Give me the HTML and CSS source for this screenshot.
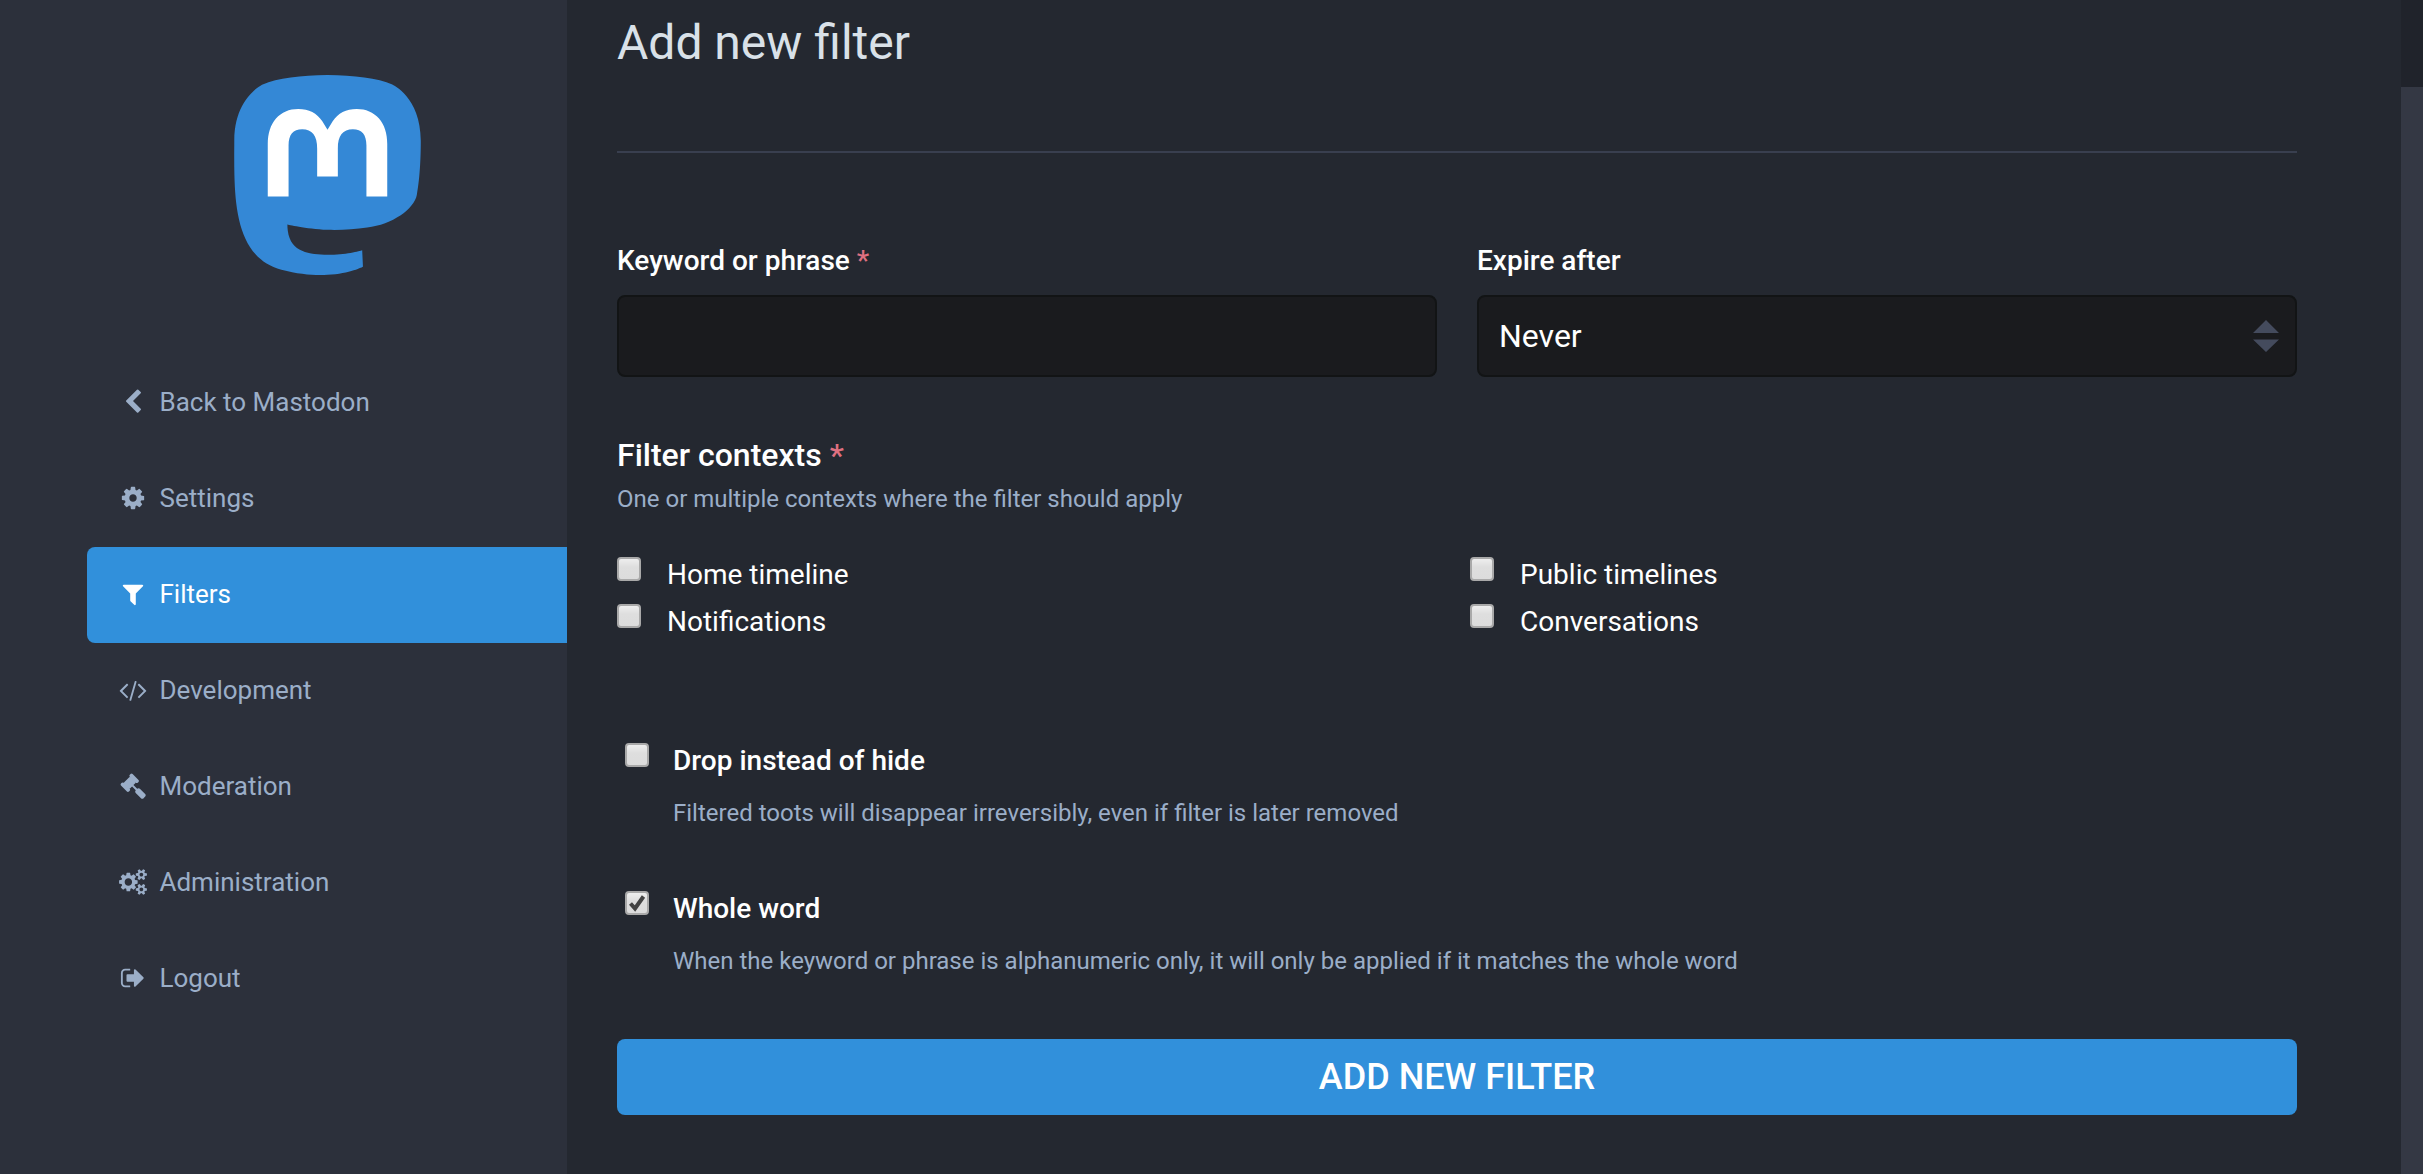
FILE: index.html
```html
<!DOCTYPE html>
<html lang="en">
<head>
<meta charset="utf-8">
<title>Add new filter</title>
<link rel="stylesheet" href="styles.css">
</head>
<body>
<div class="layout">
  <aside class="sidebar">
    <a class="logo" href="#">
      <svg viewBox="0 0 216.4144 232.00976" width="187" height="200"><path fill="#3488d6" d="M211.80734 139.0875c-3.18125 16.36625-28.4925 34.2775-57.5625 37.74875-15.15875 1.80875-30.08375 3.47125-45.99875 2.74125-26.0275-1.1925-46.565-6.2125-46.565-6.2125 0 2.53375.15625 4.94625.46875 7.2025 3.38375 25.68625 25.47 27.225 46.39125 27.9425 21.11625.7225 39.91875-5.20625 39.91875-5.20625l.8675 19.09s-14.77 7.93125-41.08125 9.39c-14.50875.7975-32.52375-.365-53.50625-5.91875C9.23234 213.82 1.40609 165.31125.20859 116.09125c-.365-14.61375-.14-28.39375-.14-39.91875 0-50.33 32.97625-65.0825 32.97625-65.0825C49.67234 3.45375 78.20359.2425 107.86484 0h.72875c29.66125.2425 58.21125 3.45375 74.8375 11.09 0 0 32.975 14.7525 32.975 65.0825 0 0 .41375 37.13375-4.59875 62.915"/><path fill="#fff" d="M177.50984 80.077v60.94125h-24.14375v-59.15c0-12.46875-5.24625-18.7975-15.74-18.7975-11.6025 0-17.4175 7.5075-17.4175 22.3525v32.37625H96.20734V85.42325c0-14.845-5.81625-22.3525-17.41875-22.3525-10.49375 0-15.74 6.32875-15.74 18.7975v59.15H38.90484V80.077c0-12.455 3.17125-22.3525 9.54125-29.675 6.56875-7.3225 15.17125-11.07625 25.85-11.07625 12.355 0 21.71125 4.74875 27.8975 14.2475l6.01375 10.08125 6.015-10.08125c6.185-9.49875 15.54125-14.2475 27.8975-14.2475 10.6775 0 19.28 3.75375 25.85 11.07625 6.36875 7.3225 9.54 17.22 9.54 29.675"/></svg>
    </a>
    <nav class="nav">
      <a class="nav-item" href="#"><svg class="icon" viewBox="0 0 1792 1792"><path d="M1427 301l-531 531 531 531q19 19 19 45t-19 45l-166 166q-19 19-45 19t-45-19l-742-742q-19-19-19-45t19-45l742-742q19-19 45-19t45 19l166 166q19 19 19 45t-19 45z"/></svg><span>Back to Mastodon</span></a>
      <a class="nav-item" href="#"><svg class="icon" viewBox="0 0 1792 1792"><path d="M1152 896q0-106-75-181t-181-75-181 75-75 181 75 181 181 75 181-75 75-181zm512-109v222q0 12-8 23t-20 13l-185 28q-19 54-39 91 35 50 107 138 10 12 10 25t-9 23q-27 37-99 108t-94 71q-12 0-26-9l-138-108q-44 23-91 38-16 136-29 186-7 28-36 28h-222q-14 0-24.5-8.5t-11.5-21.5l-28-184q-49-16-90-37l-141 107q-10 9-25 9-14 0-25-11-126-114-165-168-7-10-7-23 0-12 8-23 15-21 51-66.5t54-70.5q-27-50-41-99l-183-27q-13-2-21-12.5t-8-23.5v-222q0-12 8-23t19-13l186-28q14-46 39-92-40-57-107-138-10-12-10-24 0-10 9-23 26-36 98.5-107.5t94.5-71.5q13 0 26 10l138 107q44-23 91-38 16-136 29-186 7-28 36-28h222q14 0 24.5 8.5t11.5 21.5l28 184q49 16 90 37l142-107q9-9 24-9 13 0 25 10 129 119 165 170 7 8 7 22 0 12-8 23-15 21-51 66.5t-54 70.5q26 50 41 98l183 28q13 2 21 12.5t8 23.5z"/></svg><span>Settings</span></a>
      <a class="nav-item nav-item-active" href="#"><svg class="icon" viewBox="0 0 1792 1792"><path d="M1595 295q17 41-14 70l-493 493v742q0 42-39 59-13 5-25 5-27 0-45-19l-256-256q-19-19-19-45v-486l-493-493q-31-29-14-70 17-39 59-39h1280q42 0 59 39z"/></svg><span>Filters</span></a>
      <a class="nav-item" href="#"><svg class="icon" viewBox="0 0 1792 1792"><path d="M553 1399l-50 50q-10 10-23 10t-23-10l-466-466q-10-10-10-23t10-23l466-466q10-10 23-10t23 10l50 50q10 10 10 23t-10 23l-393 393 393 393q10 10 10 23t-10 23zm591-1067l-373 1291q-4 13-15.5 19.5t-23.5 2.5l-62-17q-13-4-19.5-15.5t-2.5-24.5l373-1291q4-13 15.5-19.5t23.5-2.5l62 17q13 4 19.5 15.5t2.5 24.5zm657 651l-466 466q-10 10-23 10t-23-10l-50-50q-10-10-10-23t10-23l393-393-393-393q-10-10-10-23t10-23l50-50q10-10 23-10t23 10l466 466q10 10 10 23t-10 23z"/></svg><span>Development</span></a>
      <a class="nav-item" href="#"><svg class="icon" viewBox="0 0 1792 1792"><path d="M1771 1536q0 53-37 90l-107 108q-39 37-91 37-53 0-90-37l-363-364q-38-36-38-90 0-53 43-96l-256-256-126 126q-14 14-34 14t-34-14q2 2 12.5 12t12.5 13 10 11.5 10 13.5 6 13.5 5.5 16.5 1.5 18q0 38-28 68-3 3-16.5 18t-19 20.5-18.5 16.5-22 15.5-22 9-26 4.5q-40 0-68-28l-408-408q-28-28-28-68 0-13 4.5-26t9-22 15.5-22 16.5-18.5 20.5-19 18-16.5q30-28 68-28 10 0 18 1.5t16.5 5.5 13.5 6 13.5 10 11.5 10 13 12.5 12 12.5q-14-14-14-34t14-34l348-348q14-14 34-14t34 14q-2-2-12.5-12t-12.5-13-10-11.5-10-13.5-6-13.5-5.5-16.5-1.5-18q0-38 28-68 3-3 16.5-18t19-20.5 18.5-16.5 22-15.5 22-9 26-4.5q40 0 68 28l408 408q28 28 28 68 0 13-4.5 26t-9 22-15.5 22-16.5 18.5-20.5 19-18 16.5q-30 28-68 28-10 0-18-1.5t-16.5-5.5-13.5-6-13.5-10-11.5-10-13-12.5-12-12.5q14 14 14 34t-14 34l-126 126 256 256q43-43 96-43 52 0 91 37l363 363q37 39 37 91z"/></svg><span>Moderation</span></a>
      <a class="nav-item" href="#"><svg class="icon" viewBox="0 0 1792 1792"><defs><path id="small-gear" fill-rule="evenodd" d="M1664 128q0 52 -38 90t-90 38t-90 -38t-38 -90q0 -53 37.5 -90.5t90.5 -37.5t90.5 37.5t37.5 90.5zM1920 198v-140q0 -16 -149 -31q-12 -27 -30 -52q51 -113 51 -138q0 -4 -4 -7q-122 -71 -124 -71q-8 0 -46 47t-52 68q-20 -2 -30 -2t-30 2q-14 -21 -52 -68t-46 -47q-2 0 -124 71q-4 3 -4 7q0 25 51 138q-18 25 -30 52q-149 15 -149 31v140q0 16 149 31q13 29 30 52q-51 113 -51 138q0 4 4 7q4 2 35 20t59 34t30 16q8 0 46 -46.5t52 -67.5q20 2 30 2t30 -2q51 71 92 112l6 2q4 0 124 -70q4 -3 4 -7q0 -25 -51 -138q17 -23 30 -52q149 -15 149 -31z"/></defs><g transform="translate(-64 1536) scale(1 -1)"><path fill-rule="evenodd" d="M896 640q0 106 -75 181t-181 75t-181 -75t-75 -181t75 -181t181 -75t181 75t75 181zM1280 731v-185q0 -10 -7 -19.5t-16 -10.5l-155 -24q-11 -35 -32 -76q34 -48 90 -115q7 -11 7 -20q0 -12 -7 -19q-23 -30 -82.5 -89.5t-78.5 -59.5q-11 0 -21 7l-115 90q-37 -19 -77 -31q-11 -108 -23 -155q-7 -24 -30 -24h-186q-11 0 -20 7.5t-10 17.5l-23 153q-34 10 -75 31l-118 -89q-7 -7 -20 -7q-11 0 -21 8q-144 133 -144 160q0 9 7 19q10 14 41 53t47 61q-23 44 -35 82l-152 24q-10 1 -17 9.5t-7 19.5v185q0 10 7 19.5t16 10.5l155 24q11 35 32 76q-34 48 -90 115q-7 11 -7 20q0 12 7 20q22 30 82 89t79 59q11 0 21 -7l115 -90q34 18 77 32q11 108 23 154q7 24 30 24h186q11 0 20 -7.5t10 -17.5l23 -153q34 -10 75 -31l118 89q8 7 20 7q11 0 21 -8q144 -133 144 -160q0 -8 -7 -19q-12 -16 -42 -54t-45 -60q23 -48 34 -82l152 -23q10 -2 17 -10.5t7 -19.5z"/><use href="#small-gear"/><use href="#small-gear" y="1024"/></g></svg><span>Administration</span></a>
      <a class="nav-item" href="#"><svg class="icon" viewBox="0 0 1792 1792"><path d="M704 1440q0 4 1 20t.5 26.5-3 23.5-10 19.5-20.5 6.5h-320q-119 0-203.5-84.5t-84.5-203.5v-704q0-119 84.5-203.5t203.5-84.5h320q13 0 22.5 9.5t9.5 22.5q0 4 1 20t.5 26.5-3 23.5-10 19.5-20.5 6.5h-320q-66 0-113 47t-47 113v704q0 66 47 113t113 47h312l11.5 1 11.5 3 8 5.5 7 9 2 13.5zm928-544q0 26-19 45l-544 544q-19 19-45 19t-45-19-19-45v-288h-448q-26 0-45-19t-19-45v-384q0-26 19-45t45-19h448v-288q0-26 19-45t45-19 45 19l544 544q19 19 19 45z"/></svg><span>Logout</span></a>
    </nav>
  </aside>
  <main class="content">
    <h2 class="title">Add new filter</h2>
    <form class="form">
      <div class="fields-row">
        <div class="field">
          <label class="label" for="phrase">Keyword or phrase <span class="required">*</span></label>
          <input class="control" id="phrase" type="text">
        </div>
        <div class="field">
          <label class="label" for="expires">Expire after</label>
          <div class="select-wrap">
            <select class="control" id="expires"><option>Never</option></select>
            <svg class="select-arrows" viewBox="0 0 26 32" width="26" height="32"><path d="M13 0L26 13H0zM0 19.5h26L13 32z"/></svg>
          </div>
        </div>
      </div>
      <div class="contexts">
        <div class="contexts-label">Filter contexts <span class="required">*</span></div>
        <div class="hint">One or multiple contexts where the filter should apply</div>
        <div class="contexts-grid">
          <label class="context"><input class="checkbox" type="checkbox"><span>Home timeline</span></label>
          <label class="context"><input class="checkbox" type="checkbox"><span>Public timelines</span></label>
          <label class="context"><input class="checkbox" type="checkbox"><span>Notifications</span></label>
          <label class="context"><input class="checkbox" type="checkbox"><span>Conversations</span></label>
        </div>
      </div>
      <div class="option">
        <input class="checkbox" id="irreversible" type="checkbox">
        <div class="option-text">
          <label class="label" for="irreversible">Drop instead of hide</label>
          <div class="hint">Filtered toots will disappear irreversibly, even if filter is later removed</div>
        </div>
      </div>
      <div class="option">
        <input class="checkbox" id="whole" type="checkbox" checked>
        <div class="option-text">
          <label class="label" for="whole">Whole word</label>
          <div class="hint">When the keyword or phrase is alphanumeric only, it will only be applied if it matches the whole word</div>
        </div>
      </div>
      <button class="submit" type="button">Add new filter</button>
    </form>
  </main>
  <div class="scrollbar"><div class="scrollbar-thumb"></div></div>
</div>
</body>
</html>
```
FILE: styles.css
```css
* {
  box-sizing: border-box;
}

body {
  margin: 0;
  height: 1174px;
  overflow: hidden;
  background: #242830;
  color: #fff;
  font-family: Roboto, sans-serif;
}

.layout {
  display: flex;
  height: 1174px;
}

.sidebar {
  flex: none;
  width: 567px;
  padding: 75px 0 0 87px;
  background: #2c303b;
}

.logo {
  display: flex;
  justify-content: center;
  height: 280px;
}

.logo svg {
  display: block;
}

.nav-item {
  display: flex;
  align-items: center;
  gap: 10px;
  height: 96px;
  padding: 0 0 2px 30px;
  border-radius: 8px 0 0 8px;
  color: #9baec8;
  font-size: 26px;
  line-height: 36px;
  text-decoration: none;
}

.nav-item-active {
  background: #3190db;
  color: #fff;
}

.icon {
  flex: none;
  width: 26px;
  height: 26px;
  margin: 0 3.5px 0 3px;
  overflow: visible;
  fill: currentColor;
}

.content {
  flex: 1;
  padding: 15px 104px 0 50px;
}

.title {
  margin: 0 0 87px;
  padding-bottom: 80px;
  border-bottom: 2px solid #393f4f;
  color: #d9e1e8;
  font-size: 48px;
  font-weight: 400;
  line-height: 56px;
}

.fields-row {
  display: grid;
  grid-template-columns: 1fr 1fr;
  gap: 40px;
}

.label {
  display: block;
  font-size: 28px;
  font-weight: 500;
  line-height: 42px;
}

.required {
  color: #df7080;
}

.control {
  display: block;
  width: 100%;
  height: 82px;
  margin: 0;
  padding: 0 20px;
  border: 2px solid #121415;
  border-radius: 8px;
  outline: 0;
  appearance: none;
  background: #1a1b1e;
  color: #fff;
  font: 32px Roboto, sans-serif;
}

.field .label {
  margin-bottom: 13px;
}

.select-wrap {
  position: relative;
}

.select-arrows {
  position: absolute;
  top: 25px;
  right: 18px;
  fill: #444b5d;
}

.contexts {
  margin-top: 56px;
}

.contexts-label {
  margin-bottom: 4px;
  font-size: 32px;
  font-weight: 500;
  line-height: 44px;
}

.hint {
  color: #9baec8;
  font-size: 24px;
  line-height: 36px;
}

.contexts-grid {
  display: grid;
  grid-template-columns: 853px 1fr;
  margin-top: 34px;
}

.context {
  display: flex;
  gap: 26px;
  height: 47px;
  padding-top: 6px;
  font-size: 28px;
  line-height: 35px;
}

.checkbox {
  flex: none;
  width: 24px;
  height: 24px;
  margin: 0;
  appearance: none;
  border: 2px solid #a9a9a9;
  border-radius: 4px;
  background: linear-gradient(#eee, #dedede 40%, #dcdcdc);
}

.checkbox:checked {
  background: url("data:image/svg+xml,%3Csvg xmlns='http://www.w3.org/2000/svg' viewBox='0 0 20 20'%3E%3Cpath d='M3.5 10.5l4.5 5L16.5 3.5' fill='none' stroke='%23444' stroke-width='4'/%3E%3C/svg%3E"), linear-gradient(#eee, #dedede 40%, #dcdcdc);
}

.option {
  display: flex;
  gap: 24px;
  height: 91px;
  margin: 95px 0 0 8px;
}

.option + .option {
  margin-top: 57px;
}

.option .checkbox {
  margin-top: 3px;
}

.option .hint {
  margin-top: 13px;
}

.submit {
  display: block;
  width: 100%;
  height: 76px;
  margin-top: 60px;
  padding: 0;
  border: 0;
  border-radius: 8px;
  background: #3190db;
  color: #fff;
  font: 500 36px Roboto, sans-serif;
  text-transform: uppercase;
}

.scrollbar {
  flex: none;
  width: 22px;
  padding-top: 87px;
  background: #20232b;
}

.scrollbar-thumb {
  height: 100%;
  background: #343844;
}
```
